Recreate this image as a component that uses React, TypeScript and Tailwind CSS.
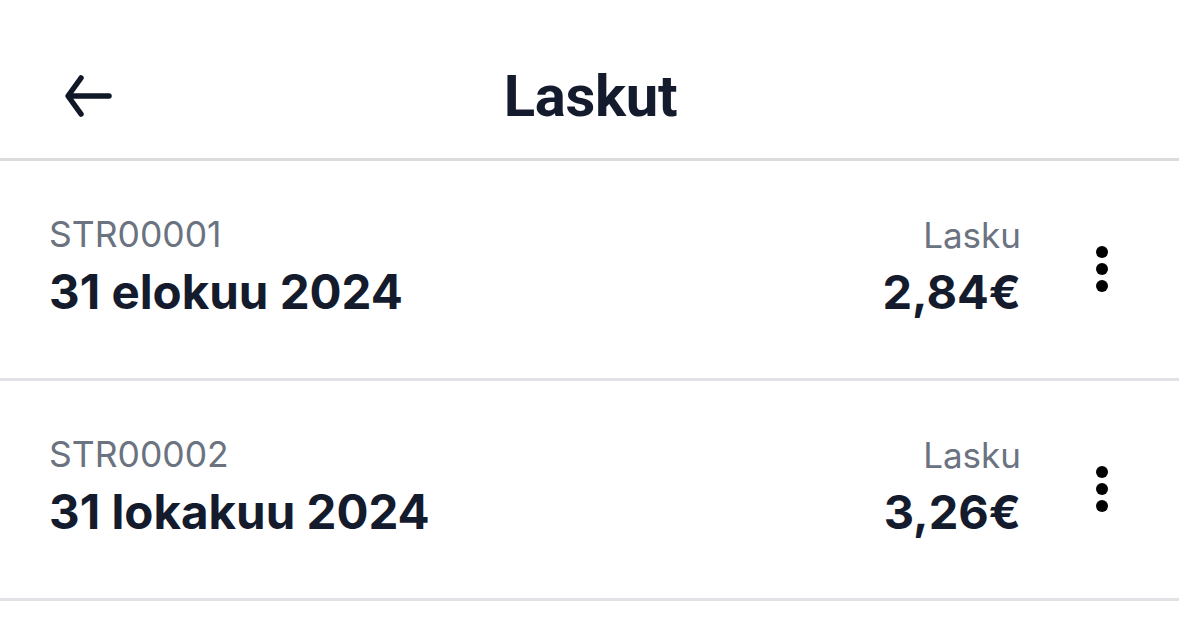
import React from "react";

const rows = [
  { id: "STR00001", date: "31 elokuu 2024", label: "Lasku", amount: "2,84€" },
  { id: "STR00002", date: "31 lokakuu 2024", label: "Lasku", amount: "3,26€" },
];

function Dots() {
  return (
    <div className="flex flex-col items-center gap-[5px] w-[14px]">
      <span className="block w-[12px] h-[12px] rounded-full bg-black" />
      <span className="block w-[12px] h-[12px] rounded-full bg-black" />
      <span className="block w-[12px] h-[12px] rounded-full bg-black" />
    </div>
  );
}

export default function App() {
  return (
    <div className="w-[1179px] h-[625px] bg-white overflow-hidden" style={{ fontFamily: "Inter, 'Noto Sans', sans-serif" }}>
      <header className="relative h-[161px] border-b-[3px] border-[#dcdcdc] flex items-center justify-center pt-[34px]">
        <svg
          className="absolute left-[64px] top-[74px]"
          width="50"
          height="44"
          viewBox="0 0 50 44"
          fill="none"
          stroke="#111827"
          strokeWidth="5.5"
          strokeLinecap="round"
          strokeLinejoin="round"
        >
          <path d="M45 22H5" />
          <path d="M17 4L4 22L17 40" />
        </svg>
        <h1
          className="text-[58px] font-bold text-[#141b2d] leading-none tracking-[-0.3px] pl-[2px]"
          style={{ fontFamily: "Roboto, sans-serif" }}
        >
          Laskut
        </h1>
      </header>
      {rows.map((r) => (
        <div key={r.id} className="h-[220px] border-b-[3px] border-[#e2e2e6] flex items-start pt-[52px] pl-[49px] pr-[70px]">
          <div className="flex-1 flex flex-col gap-[6px]">
            <div className="text-[35.5px] leading-[44px] text-[#6b7280]">{r.id}</div>
            <div className="text-[47.5px] leading-[58px] font-bold text-[#141b2d]">{r.date}</div>
          </div>
          <div className="flex flex-col items-end gap-[6px]">
            <div className="text-[35px] leading-[44px] text-[#6b7280]">{r.label}</div>
            <div className="text-[47px] leading-[58px] font-bold text-[#141b2d]">{r.amount}</div>
          </div>
          <div className="ml-[74px] pt-[33px]">
            <Dots />
          </div>
        </div>
      ))}
    </div>
  );
}
